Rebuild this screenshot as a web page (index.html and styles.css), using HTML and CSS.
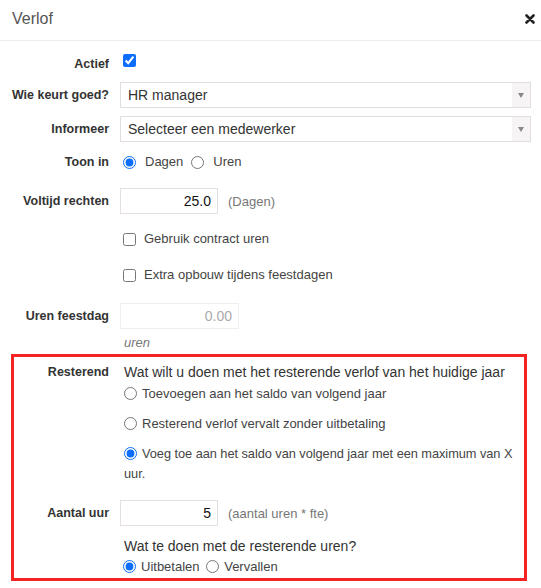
FILE: index.html
```html
<!DOCTYPE html>
<html lang="nl">
<head>
<meta charset="utf-8">
<title>Verlof</title>
<link rel="stylesheet" href="styles.css">
</head>
<body>
<div class="modal">
  <div class="modal-header">
    <h4 class="title">Verlof</h4>
    <button class="close" type="button" aria-label="Sluiten">
      <svg width="10" height="10" viewBox="0 0 10 10"><path d="M1.5 1.5 L8.5 8.5 M8.5 1.5 L1.5 8.5" stroke="#222" stroke-width="2.6" stroke-linecap="round"/></svg>
    </button>
  </div>
  <div class="modal-body">
    <div class="row row-actief">
      <label class="lbl">Actief</label>
      <div class="ctl"><input class="cb" type="checkbox" checked></div>
    </div>

    <div class="row row-hr">
      <label class="lbl">Wie keurt goed?</label>
      <div class="ctl"><div class="select"><span class="select-text">HR manager</span><span class="select-arrow"><i></i></span></div></div>
    </div>

    <div class="row row-inf">
      <label class="lbl">Informeer</label>
      <div class="ctl"><div class="select"><span class="select-text">Selecteer een medewerker</span><span class="select-arrow"><i></i></span></div></div>
    </div>

    <div class="row row-toon">
      <label class="lbl">Toon in</label>
      <div class="ctl inline-opts">
        <label class="opt-inline"><input class="rb rb-wide" type="radio" name="toon" checked>Dagen</label>
        <label class="opt-inline"><input class="rb rb-wide" type="radio" name="toon">Uren</label>
      </div>
    </div>

    <div class="row row-voltijd">
      <label class="lbl">Voltijd rechten</label>
      <div class="ctl field"><input class="num" type="text" value="25.0"><span class="hint">(Dagen)</span></div>
    </div>

    <div class="row row-check row-gebruik">
      <span class="lbl"></span>
      <div class="ctl"><label class="opt-inline"><input class="cb cb-opt" type="checkbox">Gebruik contract uren</label></div>
    </div>

    <div class="row row-check row-extra">
      <span class="lbl"></span>
      <div class="ctl"><label class="opt-inline"><input class="cb cb-opt" type="checkbox">Extra opbouw tijdens feestdagen</label></div>
    </div>

    <div class="row row-feest">
      <label class="lbl">Uren feestdag</label>
      <div class="ctl field"><input class="num num-disabled" type="text" value="0.00" disabled></div>
    </div>

    <div class="row row-help">
      <span class="lbl"></span>
      <div class="ctl"><em class="help">uren</em></div>
    </div>

    <div class="highlight">
      <div class="row row-rest">
        <label class="lbl">Resterend</label>
        <div class="ctl rest-ctl">
          <div class="question">Wat wilt u doen met het resterende verlof van het huidige jaar</div>
          <label class="opt opt-1"><input class="rb" type="radio" name="rest">Toevoegen aan het saldo van volgend jaar</label>
          <label class="opt"><input class="rb" type="radio" name="rest">Resterend verlof vervalt zonder uitbetaling</label>
          <label class="opt opt-long"><input class="rb" type="radio" name="rest" checked>Voeg toe aan het saldo van volgend jaar met een maximum van X uur.</label>
        </div>
      </div>

      <div class="row row-aantal">
        <label class="lbl">Aantal uur</label>
        <div class="ctl field"><input class="num" type="text" value="5"><span class="hint">(aantal uren * fte)</span></div>
      </div>

      <div class="row row-wat">
        <span class="lbl"></span>
        <div class="ctl rest-ctl">
          <div class="question">Wat te doen met de resterende uren?</div>
          <div class="opt-line">
            <label class="opt-pay"><input class="rb" type="radio" name="pay" checked>Uitbetalen</label>
            <label class="opt-pay"><input class="rb" type="radio" name="pay">Vervallen</label>
          </div>
        </div>
      </div>
    </div>
  </div>
</div>
</body>
</html>
```

FILE: styles.css
```css
* { box-sizing: border-box; }

body {
  margin: 0;
  background: #fff;
  font-family: "Liberation Sans", Arial, sans-serif;
  color: #333;
  accent-color: #0d6efd;
}

.modal { width: 541px; }

.modal-header {
  height: 41px;
  border-bottom: 1px solid #ececec;
  display: flex;
  align-items: center;
  justify-content: space-between;
  padding: 0 6px 0 12px;
}

.title {
  margin: 0;
  font-size: 16px;
  font-weight: normal;
  color: #555;
  line-height: 20px;
  padding-bottom: 2px;
}

.close {
  border: 0;
  background: none;
  padding: 0;
  width: 10px;
  height: 10px;
  display: flex;
  margin-bottom: 2px;
}

/* form rows */
.row {
  display: grid;
  grid-template-columns: 109px 1fr;
  column-gap: 11px;
}

.lbl {
  text-align: right;
  font-weight: bold;
  font-size: 12.5px;
  line-height: 16px;
  color: #333;
  align-self: center;
}

.ctl { min-width: 0; }

.row-actief { margin-top: 11px; height: 24px; }
.row-actief .lbl { align-self: start; padding-top: 4px; }
.row-hr { margin-top: 6px; height: 26px; }
.row-inf { margin-top: 8px; height: 26px; }
.row-toon { margin-top: 8px; height: 22px; }
.row-toon .lbl { align-self: start; padding-top: 4px; }
.row-voltijd { margin-top: 16px; height: 26px; }
.row-gebruik { margin-top: 15px; height: 20px; }
.row-extra { margin-top: 16px; height: 20px; }
.row-feest { margin-top: 18px; height: 26px; }
.row-help { margin-top: 4px; height: 16px; }

/* checkbox / radio */
.cb, .rb {
  width: 13px;
  height: 13px;
  margin: 0;
  flex: none;
}

.row-actief .cb { margin: 2px 0 0 3px; display: block; }

.inline-opts { padding-top: 2px; display: flex; }

.opt-inline {
  display: inline-flex;
  align-items: center;
  font-size: 13px;
  line-height: 16px;
  color: #444;
  margin-right: 5px;
}

.row-check .ctl { padding-top: 2px; }

.rb-wide { margin: 0 9px 0 3px; }
.cb-opt { margin: 0 8px 0 3px; }

/* select */
.select {
  height: 26px;
  width: 411px;
  border: 1px solid #e4dddd;
  display: flex;
  align-items: stretch;
  background: #fff;
}

.select-text {
  flex: 1;
  font-size: 14px;
  line-height: 24px;
  padding-left: 7px;
  color: #333;
}

.select-arrow {
  width: 18px;
  background: #f6f4f4;
  display: flex;
  align-items: center;
  justify-content: center;
}

.select-arrow i {
  display: block;
  width: 0;
  height: 0;
  border-left: 3.5px solid transparent;
  border-right: 3.5px solid transparent;
  border-top: 5px solid #888;
}

/* numeric inputs */
.field { display: flex; align-items: center; }

.num {
  width: 98px;
  height: 26px;
  border: 1px solid #e6dfdf;
  border-radius: 0;
  padding: 0 6px 0 4px;
  text-align: right;
  font-family: "Liberation Sans", Arial, sans-serif;
  font-size: 14px;
  color: #111;
  background: #fff;
  outline: none;
}

.num-disabled {
  width: 119px;
  border-color: #efefef;
  color: #aaa;
}

.hint {
  margin-left: 10px;
  font-size: 13px;
  color: #777;
}

.help {
  font-size: 13px;
  line-height: 16px;
  color: #777;
  padding-left: 4px;
}

/* highlighted block */
.highlight {
  margin: 5px 0 0 11px;
  width: 516px;
  border: 3px solid #f52424;
  padding: 5px 0 1px 0;
}

.highlight .row { grid-template-columns: 95px 1fr; }

.row-rest .lbl { align-self: start; line-height: 20px; }

.rest-ctl { padding-left: 4px; padding-right: 0; }

.question {
  font-size: 14px;
  line-height: 20px;
  color: #333;
}

.opt {
  display: block;
  margin-top: 10px;
  font-size: 13px;
  line-height: 20px;
  color: #444;
}

.opt.opt-1 { margin-top: 2px; }
.opt.opt-long { font-size: 12.8px; letter-spacing: -0.05px; }

.opt .rb, .opt-pay .rb {
  vertical-align: -2px;
  margin-right: 5px;
}

.row-aantal { margin-top: 16px; height: 26px; }

.row-wat { margin-top: 10px; }

.opt-line {
  margin-top: 1px;
  font-size: 13px;
  line-height: 20px;
  color: #444;
}

.opt-pay { margin-right: 3px; }
.opt-pay:first-child .rb { margin-left: -1px; }
```
